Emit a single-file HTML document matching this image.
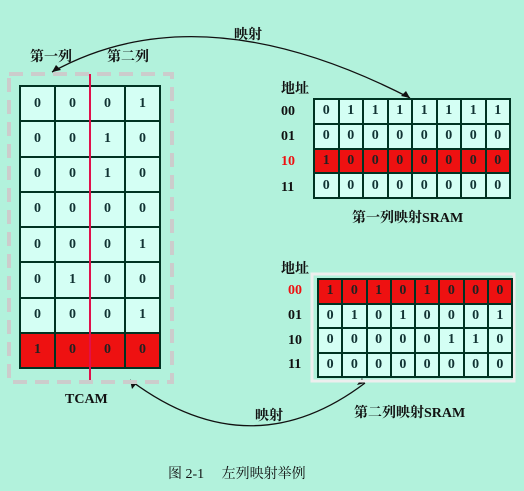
<!DOCTYPE html><html><head><meta charset="utf-8"><style>
body{margin:0;width:524px;height:491px;background:#b2f2dc;position:relative;overflow:hidden;font-family:"Liberation Serif","Noto Serif CJK SC",serif;font-weight:bold;}
.a{position:absolute}
table{border-collapse:collapse;position:absolute;}
td{border:2px solid #032;background:#d4fff4;text-align:center;font-size:14px;color:#133;padding:0}
tr.r td{background:#ee1111;color:#222}
.l{position:absolute;font-size:14px;color:#111}
</style></head><body>
<svg class="a" style="left:0;top:0" width="524" height="491">
<path d="M52 72 Q200 -10 410 98" fill="none" stroke="#111" stroke-width="1.3"/>
<path d="M52 72 l9 -2 l-5 -5z" fill="#111"/>
<path d="M410 98 l-9 -2 l5 -5z" fill="#111"/>
<path d="M130 380 Q250 470 365 383" fill="none" stroke="#111" stroke-width="1.3"/>
<path d="M130 380 l2 9 l5 -6z" fill="#111"/>
<path d="M365 383 l-8 2 l5 -7z" fill="#111"/>
<rect x="9" y="74" width="163" height="308" fill="none" stroke="#ccc" stroke-width="4" stroke-dasharray="14 8"/>
<rect x="312" y="274" width="202" height="107" fill="none" stroke="#eee" stroke-width="3"/>
</svg>
<div class="l" style="left:30px;top:46px">第一列</div>
<div class="l" style="left:107px;top:46px">第二列</div>
<div class="l" style="left:234px;top:24px">映射</div>
<table style="left:19px;top:85px;width:142px;height:284px">
<tr><td>0</td><td>0</td><td>0</td><td>1</td></tr>
<tr><td>0</td><td>0</td><td>1</td><td>0</td></tr>
<tr><td>0</td><td>0</td><td>1</td><td>0</td></tr>
<tr><td>0</td><td>0</td><td>0</td><td>0</td></tr>
<tr><td>0</td><td>0</td><td>0</td><td>1</td></tr>
<tr><td>0</td><td>1</td><td>0</td><td>0</td></tr>
<tr><td>0</td><td>0</td><td>0</td><td>1</td></tr>
<tr class="r"><td>1</td><td>0</td><td>0</td><td>0</td></tr>
</table>
<div class="a" style="left:89px;top:74px;width:2px;height:306px;background:#e0104a"></div>
<div class="l" style="left:65px;top:392px">TCAM</div>
<div class="l" style="left:281px;top:78px">地址</div>
<div class="l" style="left:281px;top:104px">00</div>
<div class="l" style="left:281px;top:129px">01</div>
<div class="l" style="left:281px;top:154px;color:#e11">10</div>
<div class="l" style="left:281px;top:180px">11</div>
<table style="left:313px;top:98px;width:198px;height:101px">
<tr><td>0</td><td>1</td><td>1</td><td>1</td><td>1</td><td>1</td><td>1</td><td>1</td></tr>
<tr><td>0</td><td>0</td><td>0</td><td>0</td><td>0</td><td>0</td><td>0</td><td>0</td></tr>
<tr class="r"><td>1</td><td>0</td><td>0</td><td>0</td><td>0</td><td>0</td><td>0</td><td>0</td></tr>
<tr><td>0</td><td>0</td><td>0</td><td>0</td><td>0</td><td>0</td><td>0</td><td>0</td></tr>
</table>
<div class="l" style="left:352px;top:207px">第一列映射SRAM</div>
<div class="l" style="left:281px;top:258px">地址</div>
<div class="l" style="left:288px;top:283px;color:#e11">00</div>
<div class="l" style="left:288px;top:308px">01</div>
<div class="l" style="left:288px;top:333px">10</div>
<div class="l" style="left:288px;top:357px">11</div>
<table style="left:317px;top:278px;width:196px;height:100px">
<tr class="r"><td>1</td><td>0</td><td>1</td><td>0</td><td>1</td><td>0</td><td>0</td><td>0</td></tr>
<tr><td>0</td><td>1</td><td>0</td><td>1</td><td>0</td><td>0</td><td>0</td><td>1</td></tr>
<tr><td>0</td><td>0</td><td>0</td><td>0</td><td>0</td><td>1</td><td>1</td><td>0</td></tr>
<tr><td>0</td><td>0</td><td>0</td><td>0</td><td>0</td><td>0</td><td>0</td><td>0</td></tr>
</table>
<div class="l" style="left:255px;top:405px">映射</div>
<div class="l" style="left:354px;top:402px">第二列映射SRAM</div>
<div class="l" style="left:168px;top:463px;font-weight:normal">图 2-1 　左列映射举例</div>
</body></html>
